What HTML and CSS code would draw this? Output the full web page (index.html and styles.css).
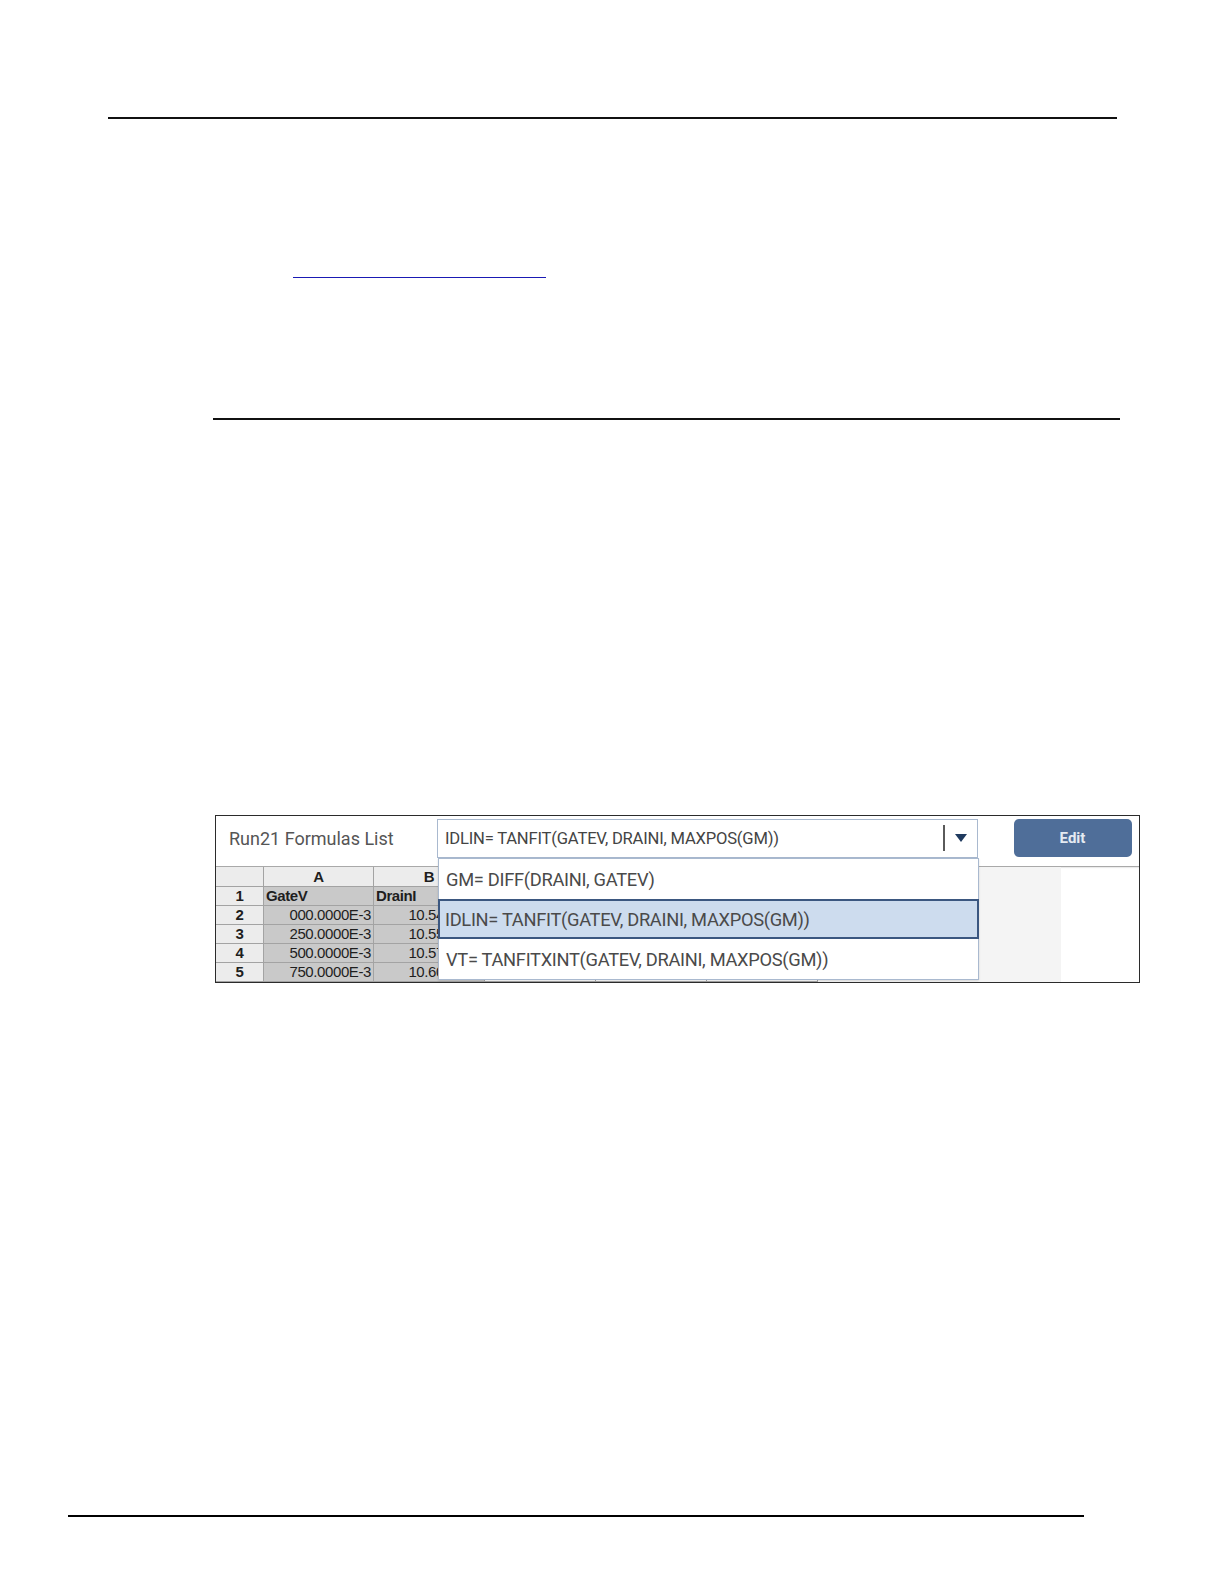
FILE: index.html
```html
<!DOCTYPE html>
<html>
<head>
<meta charset="utf-8">
<link rel="stylesheet" href="styles.css">
</head>
<body>
<div class="page">
  <div class="rule rule-top"></div>
  <a class="link-line" href="#"></a>
  <div class="rule rule-mid"></div>

  <div class="figure">
    <div class="toolbar">
      <div class="title">Run21 Formulas List</div>
      <div class="select">
        <span class="select-text">IDLIN= TANFIT(GATEV, DRAINI, MAXPOS(GM))</span>
        <span class="divider"></span>
        <span class="caret"></span>
      </div>
      <div class="edit">Edit</div>
    </div>
    <div class="sheet">
      <table class="grid">
        <colgroup>
          <col class="c-row"><col class="c-a"><col class="c-b"><col class="c-c"><col class="c-d"><col class="c-e">
        </colgroup>
        <tr class="hdr"><td></td><td class="ctr">A</td><td class="ctr">B</td><td></td><td></td><td></td></tr>
        <tr><td class="rh">1</td><td class="d b">GateV</td><td class="d b">DrainI</td><td></td><td></td><td></td></tr>
        <tr><td class="rh">2</td><td class="d rgt">000.0000E-3</td><td class="d rgt">10.5400E-3</td><td></td><td></td><td></td></tr>
        <tr><td class="rh">3</td><td class="d rgt">250.0000E-3</td><td class="d rgt">10.5500E-3</td><td></td><td></td><td></td></tr>
        <tr><td class="rh">4</td><td class="d rgt">500.0000E-3</td><td class="d rgt">10.5700E-3</td><td></td><td></td><td></td></tr>
        <tr><td class="rh">5</td><td class="d rgt">750.0000E-3</td><td class="d rgt">10.6000E-3</td><td></td><td></td><td></td></tr>
        <tr><td class="rh"></td><td class="d"></td><td class="d"></td><td class="d"></td><td class="d"></td><td class="d"></td></tr>
      </table>
    </div>
    <ul class="menu">
      <li class="item">GM= DIFF(DRAINI, GATEV)</li>
      <li class="item active">IDLIN= TANFIT(GATEV, DRAINI, MAXPOS(GM))</li>
      <li class="item">VT= TANFITXINT(GATEV, DRAINI, MAXPOS(GM))</li>
    </ul>
  </div>

  <div class="rule rule-bottom"></div>
</div>
</body>
</html>
```

FILE: styles.css
```css
* { box-sizing: border-box; }
body {
  margin: 0;
  background: #fff;
  font-family: Roboto, "Liberation Sans", Arial, sans-serif;
}
.page {
  width: 1224px;
  height: 1584px;
  display: flex;
  flex-direction: column;
  align-items: flex-start;
}
.rule { height: 2px; background: #111; }
.rule-top { margin-top: 117px; margin-left: 108px; width: 1009px; }
.link-line {
  display: block;
  margin-top: 158px;
  margin-left: 293px;
  width: 253px;
  height: 0;
  border-top: 1.5px solid #1a1ab4;
}
.rule-mid { margin-top: 140px; margin-left: 213px; width: 907px; }

.figure {
  position: relative;
  margin-top: 395px;
  margin-left: 215px;
  width: 925px;
  height: 168px;
  border: 1px solid #2b2b2b;
  overflow: hidden;
  background: #fff;
}
.toolbar {
  height: 51px;
  display: flex;
  align-items: flex-start;
  border-bottom: 1px solid #a9a9a9;
  box-shadow: 0 1px 1px rgba(0,0,0,0.08);
}
.title {
  flex: 0 0 221px;
  padding-left: 13px;
  padding-top: 12px;
  font-size: 18px;
  color: #555;
}
.select {
  margin-top: 3px;
  width: 541px;
  height: 38.5px;
  border: 1px solid #a9b9cf;
  display: flex;
  align-items: center;
  padding-left: 7px;
}
.select-text {
  flex: 1;
  font-size: 16.6px;
  color: #444;
  letter-spacing: -0.2px;
}
.divider {
  width: 2px;
  height: 26px;
  background: #5a5a5a;
}
.caret {
  width: 32px;
  height: 8px;
  display: flex;
  justify-content: center;
}
.caret::before {
  content: "";
  border-left: 6px solid transparent;
  border-right: 6px solid transparent;
  border-top: 8px solid #1f3a5f;
}
.edit {
  margin-top: 3px;
  margin-left: 35.5px;
  width: 118px;
  height: 37.5px;
  border-radius: 5px;
  background: #4f6e99;
  color: #e4eaf2;
  font-size: 15px;
  font-weight: bold;
  display: flex;
  align-items: center;
  justify-content: center;
}

.sheet {
  width: 845px;
  height: 116px;
  background: #f4f4f4;
  overflow: hidden;
}
.grid {
  border-collapse: collapse;
  table-layout: fixed;
  width: 602px;
  font-family: "Liberation Sans", Arial, sans-serif;
  font-size: 15px;
  color: #1e1e1e;
  letter-spacing: -0.4px;
}
.c-row { width: 47.5px; }
.c-a { width: 110px; }
.c-b, .c-c, .c-d, .c-e { width: 111px; }
.grid td {
  height: 19px;
  padding: 0 2px;
  border: 1px solid #a3a3a3;
  background: #fff;
  white-space: nowrap;
  overflow: hidden;
  line-height: 17px;
}
.grid tr.hdr td {
  background: #ececec;
  font-weight: bold;
  border-top: none;
}
.grid td:first-child { border-left: none; }
.grid td.rh {
  background: #ececec;
  font-weight: bold;
  text-align: center;
}
.grid td.d { background: #c9c9c9; }
.grid td.b { font-weight: bold; }
.ctr { text-align: center; }
.rgt { text-align: right; }

.menu {
  position: absolute;
  left: 222px;
  top: 42px;
  width: 541px;
  margin: 0;
  padding: 0;
  list-style: none;
  background: #fff;
  border: 1px solid #a9b9cf;
  box-shadow: 0 1px 2px rgba(0,0,0,0.12);
}
.item {
  height: 40px;
  display: flex;
  align-items: center;
  padding-left: 7px;
  font-size: 18.3px;
  color: #4a4a4a;
  letter-spacing: -0.3px;
}
.item.active {
  background: #cddcee;
  border: 2px solid #3b5780;
  padding-left: 5px;
  margin: 0 -1px;
}

.rule-bottom {
  margin-top: 532px;
  margin-left: 68px;
  width: 1016px;
  background: #000;
}
```
